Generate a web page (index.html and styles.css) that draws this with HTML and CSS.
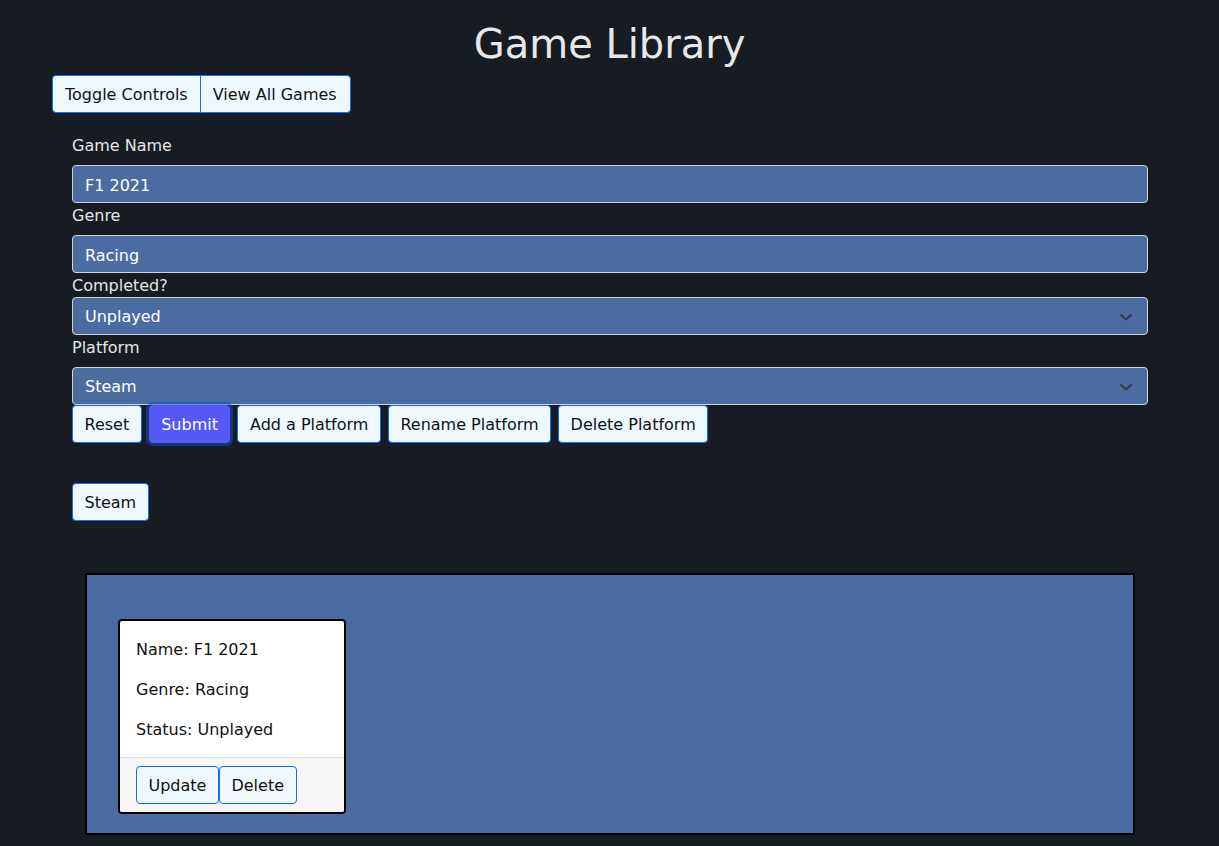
FILE: index.html
```html
<!DOCTYPE html>
<html lang="en">
<head>
<meta charset="utf-8">
<title>Game Library</title>
<link rel="stylesheet" href="styles.css">
</head>
<body>
<h1 class="title">Game Library</h1>
<div class="toolbar">
  <div class="btn-group">
    <button class="btn">Toggle Controls</button>
    <button class="btn">View All Games</button>
  </div>
</div>
<form class="game-form">
  <label class="form-label" for="name">Game Name</label>
  <input class="field" id="name" type="text" value="F1 2021">
  <label class="form-label" for="genre">Genre</label>
  <input class="field" id="genre" type="text" value="Racing">
  <label class="plain-label" for="status">Completed?</label>
  <div class="select">
    <span>Unplayed</span>
    <svg class="chev" width="14" height="10" viewBox="0 0 14 10"><path d="M1.5 2.5 L7 7.5 L12.5 2.5" fill="none" stroke="#343a40" stroke-width="2"/></svg>
  </div>
  <label class="form-label" for="platform">Platform</label>
  <div class="select">
    <span>Steam</span>
    <svg class="chev" width="14" height="10" viewBox="0 0 14 10"><path d="M1.5 2.5 L7 7.5 L12.5 2.5" fill="none" stroke="#343a40" stroke-width="2"/></svg>
  </div>
  <div class="actions">
    <button type="button" class="btn btn-sm">Reset</button>
    <button type="button" class="btn btn-sm btn-primary">Submit</button>
    <button type="button" class="btn btn-sm">Add a Platform</button>
    <button type="button" class="btn btn-sm">Rename Platform</button>
    <button type="button" class="btn btn-sm">Delete Platform</button>
  </div>
  <div class="platforms">
    <button type="button" class="btn btn-sm">Steam</button>
  </div>
</form>
<section class="library">
  <div class="card">
    <div class="card-body">
      <p>Name: F1 2021</p>
      <p>Genre: Racing</p>
      <p>Status: Unplayed</p>
    </div>
    <div class="card-footer">
      <button class="btn btn-sm">Update</button><button class="btn btn-sm">Delete</button>
    </div>
  </div>
</section>
</body>
</html>
```
FILE: styles.css
```css
* { box-sizing: border-box; }
html, body { margin: 0; padding: 0; }
body {
  background: #171b22;
  color: #e6e6e6;
  font-family: "DejaVu Sans", Verdana, sans-serif;
  font-size: 16px;
  line-height: 24px;
  width: 1219px;
  height: 846px;
  overflow: hidden;
}
.title {
  margin: 0;
  padding-top: 20px;
  height: 75px;
  text-align: center;
  font-weight: normal;
  font-size: 40px;
  line-height: 48px;
  color: #e8e8e8;
}
.toolbar { padding-left: 52px; }
.btn-group { display: inline-flex; }
.btn {
  font-family: inherit;
  font-size: 16px;
  line-height: 24px;
  padding: 7px 12px 5px;
  height: 38px;
  background: #f0f8ff;
  color: #111;
  border: 1px solid #0d6efd;
  border-radius: 4px;
  margin: 0;
}
.btn-sm { padding-left: 11.5px; padding-right: 11.5px; }
.btn-group .btn:first-child { border-radius: 4px 0 0 4px; }
.btn-group .btn:last-child { border-radius: 0 4px 4px 0; margin-left: -1px; padding-right: 13px; }
.game-form {
  width: 1076px;
  margin: 20px 0 0 72px;
  display: flex;
  flex-direction: column;
}
.form-label, .plain-label { display: block; color: #e6e6e6; height: 24px; padding-top: 1px; }
.form-label { margin-bottom: 8px; }
.field, .select {
  height: 38px;
  width: 100%;
  background: #4a6ca0;
  border: 1px solid #ced4da;
  border-radius: 4px;
  color: #fff;
  font-family: inherit;
  font-size: 16px;
  padding: 7px 12px 5px;
}
.select { display: flex; align-items: center; justify-content: space-between; padding-right: 14px; }
.chev { display: block; }
.actions { display: flex; gap: 7px; }
.btn-primary {
  background: #5558f5;
  color: #fff;
  border-color: #5558f5;
  box-shadow: 0 0 0 3px rgba(13, 80, 200, 0.55);
}
.platforms { margin-top: 40px; display: flex; }
.library {
  margin: 52px 0 0 85px;
  width: 1050px;
  height: 262px;
  background: #4a6ca0;
  border: 2px solid #000;
  padding: 44px 0 0 31px;
}
.card {
  width: 228px;
  background: #fff;
  border: 2px solid #000;
  border-radius: 4px;
  color: #111;
  overflow: hidden;
}
.card-body { padding: 17px 16px 0 16px; }
.card-body p { margin: 0 0 16px 0; }
.card-body p:last-child { margin-bottom: 15px; }
.card-footer {
  background: #f7f7f7;
  border-top: 1px solid #ddd;
  padding: 8px 16px;
  display: flex;
}
```
